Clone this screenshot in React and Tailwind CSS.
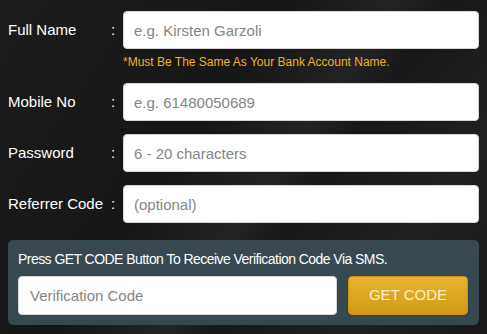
import React from "react";

function Row({ label, placeholder }) {
  return (
    <div className="flex items-center">
      <span className="w-[103px] text-[15px] text-white">{label}</span>
      <span className="w-[12px] text-[15px] text-white">:</span>
      <input
        className="flex-1 h-[38px] rounded-[4px] border border-[#d6d6d6] bg-white px-[10px] text-[15px] text-[#333] placeholder:text-[#858585] outline-none"
        placeholder={placeholder}
      />
    </div>
  );
}

export default function App() {
  return (
    <div className="w-[487px] h-[334px] overflow-hidden bg-[#1a1a1a] bg-[linear-gradient(125deg,#1c1c1c_0%,#161616_40%,#232323_55%,#181818_62%,#202020_80%,#191919_100%)] px-[8px] pt-[11px] font-['Liberation_Sans',Arial,sans-serif]">
      <Row label="Full Name" placeholder="e.g. Kirsten Garzoli" />
      <p className="ml-[115px] mt-[5px] text-[12px] leading-[16px] text-[#f0b325]">
        *Must Be The Same As Your Bank Account Name.
      </p>
      <div className="mt-[13px] flex flex-col gap-[13px]">
        <Row label="Mobile No" placeholder="e.g. 61480050689" />
        <Row label="Password" placeholder="6 - 20 characters" />
        <Row label="Referrer Code" placeholder="(optional)" />
      </div>
      <div className="mt-[17px] rounded-[5px] bg-[#374851] p-[10px]">
        <p className="text-[14px] leading-[18px] tracking-[-0.55px] text-white">
          Press GET CODE Button To Receive Verification Code Via SMS.
        </p>
        <div className="mt-[8px] flex gap-[11px]">
          <input
            className="w-[319px] h-[39px] rounded-[4px] border border-[#d6d6d6] bg-white px-[11px] text-[15px] text-[#333] placeholder:text-[#858585] outline-none"
            placeholder="Verification Code"
          />
          <button className="w-[120px] h-[39px] rounded-[4px] border border-[#c8951a] bg-[linear-gradient(180deg,#e8b42c,#d29b16)] text-[15px] text-[#fbf0c6]">
            GET CODE
          </button>
        </div>
      </div>
    </div>
  );
}
